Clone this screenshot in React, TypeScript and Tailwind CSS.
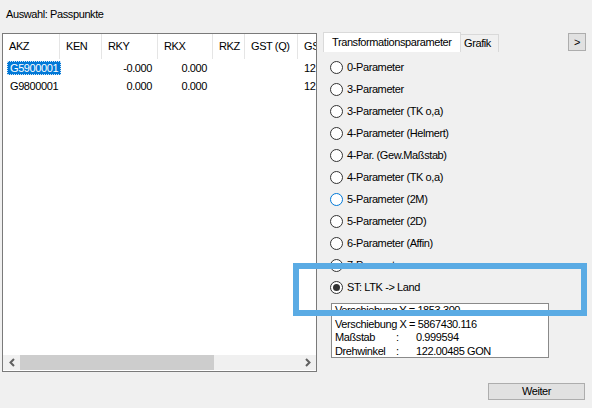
import React from "react";

const cols = "grid grid-cols-[57px_42px_56px_55px_32px_53px_100px]";

function Radio({ label, checked, hover }: { label: string; checked?: boolean; hover?: boolean }) {
  return (
    <div className="h-[22px] flex items-center gap-[4px]">
      <span
        className={`w-[13px] h-[13px] rounded-full border bg-white flex items-center justify-center shrink-0 ${
          hover ? "border-[#0078d7]" : "border-[#333333]"
        }`}
      >
        {checked && <span className="w-[7px] h-[7px] rounded-full bg-[#333333]" />}
      </span>
      <span className="whitespace-nowrap">{label}</span>
    </div>
  );
}

function Chevron({ dir }: { dir: "l" | "r" }) {
  return (
    <svg width="6" height="9" viewBox="0 0 6 9">
      <polyline
        points={dir === "l" ? "5,1 1.5,4.5 5,8" : "1,1 4.5,4.5 1,8"}
        fill="none"
        stroke="#606060"
        strokeWidth="2"
      />
    </svg>
  );
}

export default function App() {
  const radios = [
    "0-Parameter",
    "3-Parameter",
    "3-Parameter (TK o,a)",
    "4-Parameter (Helmert)",
    "4-Par. (Gew.Maßstab)",
    "4-Parameter (TK o,a)",
    "5-Parameter (2M)",
    "5-Parameter (2D)",
    "6-Parameter (Affin)",
    "7-Parameter",
  ];
  return (
    <div className="relative w-[592px] h-[408px] bg-[#f0f0f0] text-black overflow-hidden font-['Liberation_Sans',Arial,sans-serif] text-[11px] tracking-[-0.4px] leading-[13px]">
      <div className="h-[32px] pt-[8px] pl-[6px]">Auswahl: Passpunkte</div>

      <div className="flex h-[339px]">
        {/* table */}
        <div className="ml-[2px] mt-[1px] w-[315px] h-[339px] border border-[#7a7a7a] bg-white flex flex-col overflow-hidden">
          <div className={`${cols} h-[25px] shrink-0`}>
            {["AKZ", "KEN", "RKY", "RKX", "RKZ", "GST (Q)", "GS"].map((h) => (
              <div key={h} className="flex items-center pl-[6px] border-r border-[#e5e5e5] whitespace-nowrap overflow-hidden">
                {h}
              </div>
            ))}
          </div>
          <div className="flex-1">
            <div className={`${cols} h-[18px] items-center`}>
              <div className="pl-[4px]">
                <span className="inline-flex items-center h-[14px] px-[2px] bg-[#0078d7] text-white border border-dotted border-[#cfe4f7]">
                  G5900001
                </span>
              </div>
              <div />
              <div className="text-right pr-[6px]">-0.000</div>
              <div className="text-right pr-[6px]">0.000</div>
              <div />
              <div />
              <div className="pl-[6px]">12</div>
            </div>
            <div className={`${cols} h-[18px] items-center`}>
              <div className="pl-[7px]">G9800001</div>
              <div />
              <div className="text-right pr-[6px]">0.000</div>
              <div className="text-right pr-[6px]">0.000</div>
              <div />
              <div />
              <div className="pl-[6px]">12</div>
            </div>
          </div>
          <div className="h-[15px] shrink-0 bg-[#f0f0f0] flex items-center mb-[1px]">
            <div className="w-[17px] flex justify-center">
              <Chevron dir="l" />
            </div>
            <div className="w-[194px] h-[15px] bg-[#cdcdcd]" />
            <div className="flex-1" />
            <div className="w-[17px] flex justify-center">
              <Chevron dir="r" />
            </div>
          </div>
        </div>

        {/* right panel */}
        <div className="ml-[6px] flex-1 flex flex-col">
          <div className="flex items-start h-[20px] pr-[6px]">
            <div className="w-[138px] h-[20px] bg-white border border-b-0 border-[#dadada] pl-[8px] flex items-center whitespace-nowrap">
              Transformationsparameter
            </div>
            <div className="mt-[2px] w-[38px] h-[18px] border-t border-r border-[#d9d9d9] pl-[3px] flex items-center">
              Grafik
            </div>
            <div className="flex-1" />
            <div className="mt-[1px] w-[18px] h-[18px] bg-[#e1e1e1] border border-[#adadad] flex items-center justify-center">
              &gt;
            </div>
          </div>
          <div className="pt-[4px] pl-[7px] flex flex-col">
            {radios.map((r) => (
              <Radio key={r} label={r} hover={r === "5-Parameter (2M)"} />
            ))}
            <Radio label="ST: LTK -> Land" checked />
            <div className="mt-[5px] ml-[1px] w-[218px] h-[55px] bg-white border border-[#8a8a8a] pl-[3px] leading-[13.5px]">
              <div>Verschiebung Y = 1853.300</div>
              <div>Verschiebung X = 5867430.116</div>
              <div className="flex">
                <span className="w-[61px]">Maßstab</span>
                <span className="w-[20px]">:</span>
                <span>0.999594</span>
              </div>
              <div className="flex">
                <span className="w-[61px]">Drehwinkel</span>
                <span className="w-[20px]">:</span>
                <span>122.00485 GON</span>
              </div>
            </div>
          </div>
        </div>
      </div>

      <div className="flex justify-end pr-[7px] pt-[12px]">
        <div className="w-[97px] h-[17px] bg-[#e1e1e1] border border-[#adadad] flex items-center justify-center">
          Weiter
        </div>
      </div>

      {/* highlight overlay */}
      <div className="absolute left-[293px] top-[263px] w-[294px] h-[53px] border-[6px] border-[#5aabe4] pointer-events-none" />
    </div>
  );
}
